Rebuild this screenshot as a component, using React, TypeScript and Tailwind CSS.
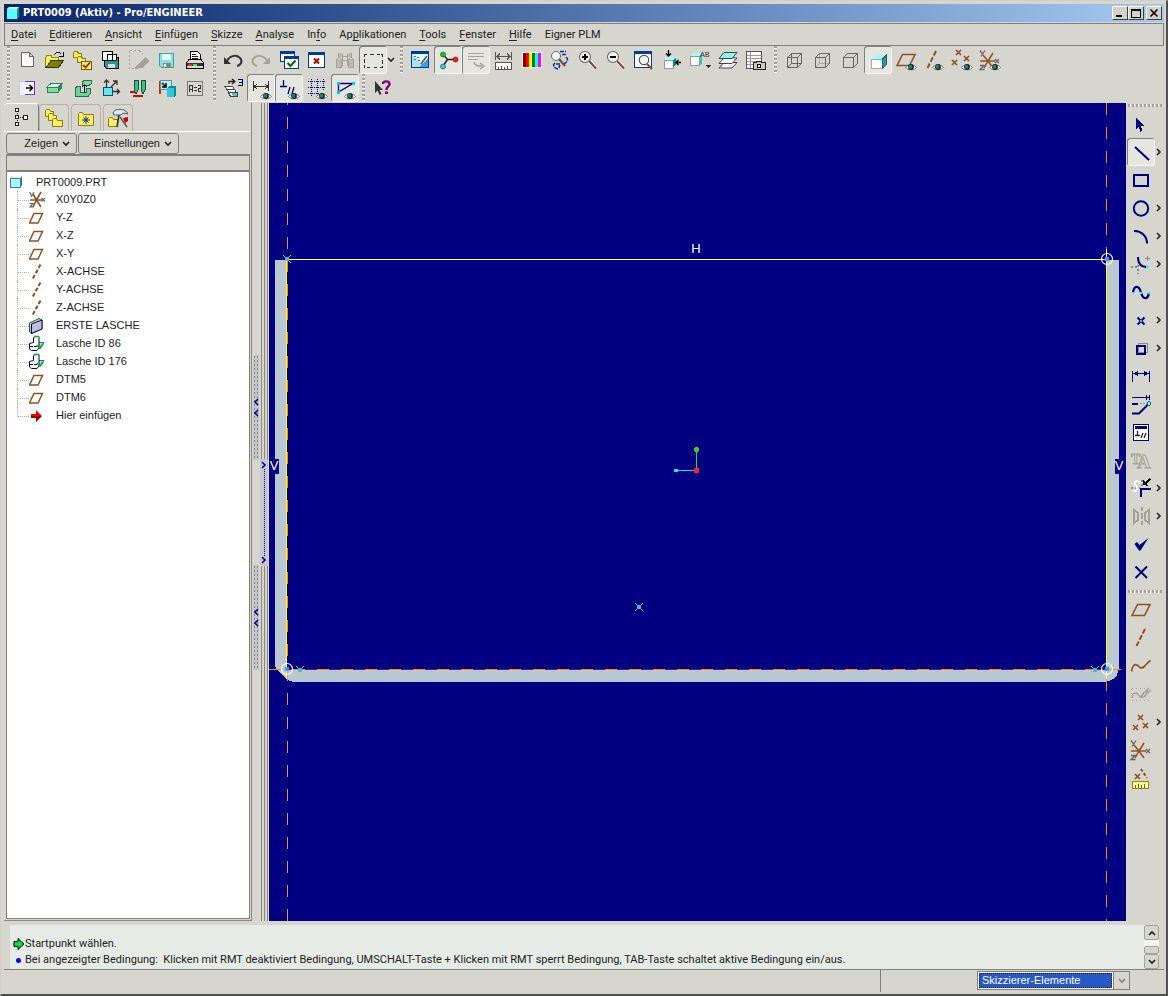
import type { ReactNode } from "react";

interface Tool {
  label: string;
  art: ReactNode;
  active?: boolean;
  disabled?: boolean;
  flyout?: boolean;
}

interface TreeItem {
  label: string;
  kind: "csys" | "plane" | "axis" | "wall" | "flange" | "insert";
}

const BROWN = "#92501f";
const NAVY = "#000080";
const GRAY = "#a5a193";

function Eye({ x = 19, y = 21 }: { x?: number; y?: number }) {
  return (
    <g transform={`translate(${x} ${y})`} shapeRendering="auto">
      <path d="M-5.5 .5C-3 -3 3 -3 5.5 .5C3 3.5 -3 3.5 -5.5 .5Z" fill="#fff" stroke="#555" strokeWidth=".8" />
      <circle cx="0" cy="0" r="2.9" fill="#222" />
      <path d="M-2 -2H1V1.5H-2Z" fill="#008a8a" />
    </g>
  );
}

function Cross({ x, y, r = 2.5, color = BROWN }: { x: number; y: number; r?: number; color?: string }) {
  return (
    <path
      d={`M${x - r} ${y - r}L${x + r} ${y + r}M${x + r} ${y - r}L${x - r} ${y + r}`}
      stroke={color}
      strokeWidth="1.7"
      shapeRendering="auto"
    />
  );
}

function Folder({ x, y, w = 11, h = 8 }: { x: number; y: number; w?: number; h?: number }) {
  return (
    <path
      d={`M${x} ${y + h}V${y + 1}L${x + 1} ${y}H${x + 4}L${x + 5} ${y + 2}H${x + w}V${y + h}Z`}
      fill="#ffef5a"
      stroke="#8c7a1e"
    />
  );
}

function Glass({ sign }: { sign: string }) {
  return (
    <g shapeRendering="auto">
      <path d="M15 15L22 22.5" stroke="#fff" strokeWidth="3.6" />
      <path d="M15 15L22 22.5" stroke="#8b4a24" strokeWidth="2.2" />
      <circle cx="11" cy="11" r="5.5" fill="#f0f3f0" stroke="#666" strokeWidth="1.1" />
      <path d={sign} stroke="#000" strokeWidth="2" />
    </g>
  );
}

function Csys() {
  return (
    <g shapeRendering="auto">
      <path d="M4 15H19M12 15L17 7M12 15L7 9M12 15L17 22M12 15L8 22" stroke={BROWN} strokeWidth="1.5" />
      <path d="M4 4.5L6.5 8M9 4.5L5 10.5M19 13L23 17M23 13L19 17M4 19.5H8L4 23.5H8.5" stroke="#666" strokeWidth="1.3" />
    </g>
  );
}

const planeArt = <path d="M5 19.5L10.5 8.5H23L17.5 19.5Z" stroke={BROWN} strokeWidth="1.6" shapeRendering="auto" />;
const axisPath = (x: number) => (
  <path d={`M${x} 5L${x - 9} 23`} stroke={BROWN} strokeWidth="1.9" strokeDasharray="5 2" shapeRendering="auto" />
);

const fileTools: Tool[] = [
  { label: "Neu", art: <path d="M8.5 6.5h8l4 4v10h-12zM16.5 6.5v4h4" fill="#fff" stroke="#666" /> },
  {
    label: "Öffnen",
    art: (
      <>
        <path d="M4.5 21.5V11.5L6 9.5H10L11 11.5H17.5V15" fill="#ffef5a" stroke="#8c8c00" />
        <path d="M5 21.5L10 14.5H22.5L17.5 21.5Z" fill="#808000" stroke="#333300" />
        <path d="M13.5 9.5C14 6 18 5 20 8M22.5 6V10.5H18" stroke="#000" />
      </>
    ),
  },
  {
    label: "Arbeitsverzeichnis",
    art: (
      <>
        <Folder x={4.5} y={5.5} w={8} h={6} />
        <Folder x={8.5} y={10.5} w={8} h={6} />
        <rect x="12.5" y="15.5" width="10" height="8" fill="#ffef5a" stroke="#6b5d10" />
        <path d="M14 19L16.5 21.5L21 16.5" stroke="#c00000" strokeWidth="1.6" shapeRendering="auto" />
      </>
    ),
  },
  {
    label: "Kopie speichern",
    art: (
      <>
        <path d="M7.5 11.5H21.5V22.5H9.5L7.5 20.5Z" fill="#1f9aa0" stroke="#000" />
        <path d="M11 18h7v4h-7z" fill="#ddd" />
        <path d="M5.5 5.5h10v9h-10zM10.5 8.5h9v6h-9z" fill="#fff" stroke="#000" />
      </>
    ),
  },
  {
    label: "Aus Sitzung entfernen",
    disabled: true,
    art: (
      <>
        <path d="M4.5 4.5H14M4.5 4.5V22.5H14M14 4.5L20 10" stroke={GRAY} strokeDasharray="2 2" />
        <path d="M20 11L24 15L17 22H13V19Z" fill={GRAY} />
        <path d="M13 20L10 22.5" stroke={GRAY} strokeWidth="2" />
      </>
    ),
  },
  {
    label: "Speichern",
    art: (
      <>
        <path d="M6.5 7.5H20.5V21.5H8.5L6.5 19.5Z" fill="#8ae0e4" stroke="#3f9ea6" />
        <path d="M9 8h9v6H9z" fill="#e4ffff" />
        <path d="M10 17h8v4h-8z" fill="#888" />
        <path d="M11 18h2v3h-2z" fill="#fff" />
      </>
    ),
  },
  {
    label: "Drucken",
    art: (
      <>
        <path d="M9.5 14V5.5H16.5L19.5 8.5V14Z" fill="#fff" stroke="#000" />
        <path d="M11 8.5H15M11 10.5H17M11 12.5H17" stroke="#222" />
        <path d="M5.5 16.5L8 13.5H20L22.5 16.5V22.5H5.5Z" fill="#d8d8d8" stroke="#000" />
        <path d="M6 17h16v3H6z" fill="#333" />
        <path d="M7 18h4v2H7z" fill="#f22" />
        <path d="M12 18h4v2h-4z" fill="#3f3" />
      </>
    ),
  },
];

const editTools: Tool[] = [
  {
    label: "Rückgängig",
    art: (
      <g shapeRendering="auto">
        <path d="M8 15C10 10 17 8 21 12C24 15 22 19 18 20" stroke="#333" strokeWidth="2" />
        <path d="M5 11V18H12Z" fill="#333" />
      </g>
    ),
  },
  {
    label: "Wiederherstellen",
    disabled: true,
    art: (
      <g shapeRendering="auto">
        <path d="M20 15C18 10 11 8 7 12C4 15 6 19 10 20" stroke={GRAY} strokeWidth="2" />
        <path d="M23 11V18H16Z" fill={GRAY} />
      </g>
    ),
  },
  {
    label: "Fenster aktivieren",
    art: (
      <>
        <path d="M5.5 5.5h14v10h-14z" fill="#fff" stroke="#003a9c" />
        <path d="M5 5h15v3H5z" fill="#003a9c" />
        <path d="M9.5 10.5h14v12h-14z" fill="#fff" stroke="#003a9c" />
        <path d="M9 10h15v3H9z" fill="#003a9c" />
        <path d="M12.5 17L15.5 20L20.5 14.5" stroke="#006400" strokeWidth="2" shapeRendering="auto" />
      </>
    ),
  },
  {
    label: "Fenster schließen",
    art: (
      <>
        <path d="M5.5 6.5h16v15h-16z" fill="#fff" stroke="#003a9c" />
        <path d="M5 6h17v3H5z" fill="#003a9c" />
        <path d="M11 12.5L16 17.5M16 12.5L11 17.5" stroke="#b00000" strokeWidth="2" shapeRendering="auto" />
      </>
    ),
  },
  {
    label: "Suchen",
    disabled: true,
    art: (
      <>
        <path d="M7 7h4v4H7zM17 7h4v4h-4zM6 13h5v8H6zM17 13h5v8h-5z" fill="#bdbaae" />
        <path d="M7.5 7V11L5.5 14V21H10.5V14L8.5 11M20.5 7V11L22.5 14V21H17.5V14L19.5 11M11.5 8V20M16.5 8V20M12 10.5H16M12 14.5H16" stroke={GRAY} />
      </>
    ),
  },
  {
    label: "Auswahlrahmen",
    active: true,
    art: (
      <path
        d="M5 11V8.5H8M11 8.5H15M18 8.5H21M22 8.5H23.5V11M23.5 14V18M23.5 20V21.5H21M18 21.5H15M11 21.5H8M6 21.5H5.5V19M5.5 17V13"
        stroke="#333"
      />
    ),
  },
];

const viewTools: Tool[] = [
  {
    label: "Neu zeichnen",
    art: (
      <>
        <path d="M5.5 5.5h17v16h-17z" fill="#e0fbff" stroke="#003a9c" />
        <path d="M5 5h18v3H5z" fill="#003a9c" />
        <path d="M6 8L17 20L22 12V21H6Z" fill="#a8e4f8" />
        <path d="M15 19L22 12V21H14Z" fill="#3f9ee0" />
        <path d="M8 10.5h2M8 13.5h2M11 11.5h2M12 14.5h2" stroke="#2878c8" />
        <path d="M21 10L15 18" stroke="#7a4a20" strokeWidth="1.5" shapeRendering="auto" />
      </>
    ),
  },
  {
    label: "Drehzentrum",
    active: true,
    art: (
      <g shapeRendering="auto">
        <path d="M9 8.5L13.5 13.5L9 20M13.5 13.5H21" stroke="#222" strokeWidth="1.5" />
        <circle cx="9" cy="8.5" r="2.5" fill="#19c819" stroke="#075207" strokeWidth=".6" />
        <circle cx="9" cy="20.5" r="2.5" fill="#34c8d0" stroke="#075258" strokeWidth=".6" />
        <circle cx="21.5" cy="13.5" r="2.5" fill="#f02020" stroke="#700" strokeWidth=".6" />
      </g>
    ),
  },
  {
    label: "Orientierungsmodus",
    active: true,
    disabled: true,
    art: (
      <>
        <path d="M6 7.5H22M6 10.5H22M6 13.5H16" stroke={GRAY} />
        <path d="M12 16C13 20 16 20 20 20M18 17L22 20L18 23" stroke={GRAY} strokeWidth="1.5" shapeRendering="auto" />
      </>
    ),
  },
  {
    label: "Messen",
    art: (
      <>
        <path d="M5.5 6V14M21.5 6V14M6 10.5H21M10 7.5L7 10.5L10 13.5M17 7.5L20 10.5L17 13.5" stroke="#555" />
        <path d="M5.5 16.5h16v7h-16z" fill="#fff" stroke="#555" />
        <path d="M8.5 21V23M11.5 20V23M14.5 21V23M17.5 20V23" stroke="#555" />
      </>
    ),
  },
  {
    label: "Farben",
    art: (
      <>
        <path d="M4 6h20v16H4z" fill="#fff" />
        <path d="M5 7h3v14H5z" fill="#800000" />
        <path d="M8 7h3v14H8z" fill="#f00" />
        <path d="M11 7h3v14h-3z" fill="#ff0" />
        <path d="M14 7h3v14h-3z" fill="#008000" />
        <path d="M17 7h3v14h-3z" fill="#0ff" />
        <path d="M20 7h3v14h-3z" fill="#f0f" />
      </>
    ),
  },
  {
    label: "Bildschirm drehen",
    art: (
      <g shapeRendering="auto">
        <path d="M13 13L19 20" stroke="#8b4a24" strokeWidth="2.2" />
        <circle cx="10" cy="10" r="4.5" fill="#f4f7f4" stroke="#666" />
        <path d="M14 5.5H20M16 8.5H21M20 11C23 13 21 16 18 18M9 17C6 19 8 23 13 23M10 18L14 18L13 22" stroke="#0a32a0" strokeWidth="1.5" strokeDasharray="4 1" />
      </g>
    ),
  },
  { label: "Vergrößern", art: <Glass sign="M8 11H14M11 8V14" /> },
  { label: "Verkleinern", art: <Glass sign="M8 11H14" /> },
  {
    label: "Neu einpassen",
    art: (
      <>
        <path d="M4.5 5.5h17v16h-17z" fill="#fff" stroke="#003a9c" />
        <path d="M4 5h18v3H4z" fill="#003a9c" />
        <g shapeRendering="auto">
          <path d="M17 18L22 23" stroke="#8b4a24" strokeWidth="2" />
          <circle cx="14" cy="14" r="4.7" fill="#f8f8f8" stroke="#555" strokeWidth="1.2" />
        </g>
      </>
    ),
  },
  {
    label: "Neu orientieren",
    art: (
      <>
        <path d="M6 14L9 11H18V18L15 22H6Z" fill="#9ff" />
        <path d="M6 14h9v8H6z" fill="#fff" stroke="#999" />
        <path d="M15 14L18 11V18L15 22Z" fill="#008b8b" />
        <path d="M10.5 4V10M8 7.5L10.5 10L13 7.5M23 16.5H18M20.5 14L18 16.5L20.5 19" stroke="#000" strokeWidth="1.4" shapeRendering="auto" />
      </>
    ),
  },
  {
    label: "Gespeicherte Ansichten",
    art: (
      <>
        <path d="M4 10L7 7H16V17L13 20H4Z" fill="#9ff" />
        <path d="M4.5 10.5h9v9h-9z" fill="#fff" stroke="#999" />
        <path d="M13 10L16 7V17L13 20Z" fill="#4cb8c0" />
        <text x="14" y="11" fontSize="8" fontFamily="Liberation Mono, monospace" fill="#333">
          AB
        </text>
        <path d="M19 19h6l-3 3z" fill="#333" />
      </>
    ),
  },
  {
    label: "Ebenen",
    art: (
      <g stroke="#444" shapeRendering="auto">
        <path d="M5 22L10 16.5H23L18 22Z" fill="#fff" />
        <path d="M5 17.5L10 12H23L18 17.5Z" fill="#fff" />
        <path d="M5 12.5L10 6.5H23L18 12.5Z" fill="#8ff4f6" />
      </g>
    ),
  },
  {
    label: "Ansichtsmanager",
    art: (
      <>
        <path d="M4.5 5.5h15v17h-15z" fill="#fff" stroke="#555" />
        <path d="M5 9.5H19M5 12.5H19M5 15.5H19M5 18.5H19M8.5 6V22" stroke="#999" />
        <path d="M11.5 16.5H14L15 15H19L20 16.5H23.5V23.5H11.5Z" fill="#d0c9b4" stroke="#222" />
        <circle cx="17" cy="20" r="2" fill="#fff" stroke="#000" />
      </>
    ),
  },
];

const displayTools: Tool[] = [
  {
    label: "Drahtmodell",
    art: <path d="M7.5 11.5H17.5V21.5H7.5ZM11.5 7.5H21.5V17.5H11.5ZM7.5 11.5L11.5 7.5M17.5 11.5L21.5 7.5M17.5 21.5L21.5 17.5M7.5 21.5L11.5 17.5" stroke="#666" />,
  },
  {
    label: "Verdeckte Kante",
    art: (
      <>
        <path d="M11.5 7.5V17.5H21.5M7.5 21.5L11.5 17.5" stroke="#aaa" />
        <path d="M7.5 11.5H17.5V21.5H7.5ZM7.5 11.5L11.5 7.5H21.5V17.5L17.5 21.5M17.5 11.5L21.5 7.5" stroke="#666" />
      </>
    ),
  },
  { label: "Keine Verdeckten", art: <path d="M7.5 11.5H17.5V21.5H7.5ZM7.5 11.5L11.5 7.5H21.5V17.5L17.5 21.5M17.5 11.5L21.5 7.5" stroke="#666" /> },
  {
    label: "Schattiert",
    active: true,
    art: (
      <>
        <path d="M7 13L12 8.5H23L18 13Z" fill="#9ff" />
        <path d="M7.5 13.5h11v9h-11z" fill="#fff" stroke="#aaa" />
        <path d="M18.5 13L22.5 9V18.5L18.5 22.5Z" fill="#1aa0a8" stroke="#357" />
      </>
    ),
  },
  { label: "Bezugsebenen", art: <>{planeArt}<Eye /></> },
  { label: "Bezugsachsen", art: <>{axisPath(16)}<Eye x={18} /></> },
  { label: "Bezugspunkte", art: <><Cross x={10.5} y={6.5} /><Cross x={18.5} y={12.5} /><Cross x={6.5} y={16.5} /><Eye /></> },
  { label: "Koordinatensysteme", art: <><Csys /><Eye /></> },
];

const featureTools: Tool[] = [
  {
    label: "Einfügen",
    art: (
      <>
        <path d="M6 7h6v14H6z" fill="#f0f0ff" stroke="#ccd" />
        <path d="M12 7.5H21.5V20.5H12" fill="#fff" stroke="#8a2be2" />
        <path d="M13 14H19M16.5 11L19.5 14L16.5 17" stroke="#000" strokeWidth="1.5" shapeRendering="auto" />
      </>
    ),
  },
  {
    label: "Flach",
    art: (
      <>
        <path d="M6 13L10 9.5H21L17 13Z" fill="#d4f8e0" stroke="#3a7a5a" />
        <path d="M6 13H17V18H6Z" fill="#7be0a4" stroke="#3a7a5a" />
        <path d="M17 13L21 9.5V14.5L17 18Z" fill="#2d8a5c" />
      </>
    ),
  },
  {
    label: "Flansch",
    art: (
      <>
        <path d="M13 8.5L15 6.5H22V10L20 11.5H13Z" fill="#7be0a4" stroke="#2d6a4c" />
        <path d="M6.5 14.5L8 12H11V18H17V14H21V20L19 22.5H6.5Z" fill="#6cd49a" stroke="#2d6a4c" />
        <path d="M15.5 19V11M13 13L15.5 10.5L18 13" stroke="#000" />
      </>
    ),
  },
  {
    label: "Verschieben",
    art: (
      <>
        <path d="M6.5 13.5h9v8h-9z" fill="#60e8f0" stroke="#246" />
        <path d="M9.5 13V6M7 8.5L9.5 6L12 8.5M14 13L20 7M16 7H20V11M16 17.5H22M20 15L22.5 17.5L20 20" stroke="#333" strokeWidth="1.3" shapeRendering="auto" />
      </>
    ),
  },
  {
    label: "Stifte",
    art: (
      <>
        <path d="M9 6h4v10l-2 4-2-4zM16 6h4v10l-2 4-2-4z" fill="#39c088" stroke="#174e38" />
        <path d="M5 17.5H10M8 21.5H18" stroke="#d00" strokeWidth="2" />
      </>
    ),
  },
  {
    label: "Referenz",
    art: (
      <>
        <path d="M6.5 20V7" stroke="#c22" strokeWidth="2" />
        <path d="M7.5 6.5H18.5V15.5H7.5Z" fill="#b8ecf4" stroke="#6a8aa0" />
        <path d="M14 14L16 12H23V21L21 23H14Z" fill="#0a8a98" />
        <path d="M14 14h7v9h-7z" fill="#30c8d8" />
        <path d="M9 9L13 13M13 9V13H9" stroke="#000" strokeWidth="1.5" shapeRendering="auto" />
      </>
    ),
  },
  {
    label: "Beziehungen",
    art: (
      <>
        <path d="M6.5 7.5h15v14h-15z" stroke="#777" />
        <path d="M8.5 18V12L9.5 11H10.5L11.5 12V18M8.5 15.5H11.5M13 13.5H15.5M13 16.5H15.5M17 11.5H19.5V14.5H17.5V17.5H20" stroke="#333" />
      </>
    ),
  },
];

const sketchTools: Tool[] = [
  {
    label: "Skizzenansicht",
    art: (
      <>
        <path d="M5.5 12.5h8l2 3h-7zM7.5 15.5h8l2 3h-7zM9.5 18.5h9v4h-7z" fill="#fff" stroke="#444" />
        <path d="M13 19h5v3h-4z" fill="#2fd0d8" />
        <path d="M10 10V7.5H15M13 5L16 7.5L13 10" stroke="#222" strokeWidth="1.3" shapeRendering="auto" />
        <path d="M19 5.5H23.5V11.5H19M20 8.5H23" stroke={NAVY} />
      </>
    ),
  },
  { label: "Bemaßungen anzeigen", active: true, art: <><path d="M6.5 7V17M21.5 7V17M7 12.5H21M10 10L7 12.5L10 15M18 10L21 12.5L18 15" stroke="#333" /><Eye x={19} y={22} /></> },
  { label: "Bedingungen anzeigen", active: true, art: <><path d="M5 12.5H12M8.5 6V12M13 20L15 13M17 20L19 13" stroke={NAVY} strokeWidth="1.3" shapeRendering="auto" /><Eye x={19} y={22} /></> },
  { label: "Raster anzeigen", art: <><path d="M5 7.5H22M5 13.5H22M5 19.5H16M8.5 5V22M14.5 5V22M20.5 5V17" stroke={NAVY} strokeDasharray="1 1" /><Eye x={19} y={22} /></> },
  { label: "Eckpunkte anzeigen", active: true, art: <><path d="M7.5 9.5H22L7.5 18Z" stroke={NAVY} strokeWidth="1.3" shapeRendering="auto" /><path d="M6 8h3v3H6zM21 8h3v3h-3zM6 17h3v3H6z" fill="#00c8ff" /><Eye x={19} y={22} /></> },
];

const helpTools: Tool[] = [
  {
    label: "Kontexthilfe",
    art: (
      <g shapeRendering="auto">
        <path d="M7 7V19L9.5 16.5L11.5 21L13.5 20L11.5 16H15Z" fill="#333" />
        <path d="M15 10C15 6.5 21.5 6.5 21.5 10C21.5 12.5 18.5 12.5 18.5 16" stroke="#800080" strokeWidth="2.4" />
        <path d="M17 17.5h3v2.5h-3z" fill="#800080" />
      </g>
    ),
  },
];

const sketcherTools: Tool[] = [
  { label: "Auswählen", art: <path d="M9 7V19L11.5 16.5L13.5 21.5L15.5 20.5L13.5 15.5H17Z" fill={NAVY} /> },
  { label: "Linie", active: true, flyout: true, art: <path d="M8 9L22 22" stroke={NAVY} strokeWidth="2" shapeRendering="auto" /> },
  { label: "Rechteck", art: <path d="M7 9H21V20H7Z" stroke={NAVY} strokeWidth="2" /> },
  { label: "Kreis", flyout: true, art: <circle cx="14" cy="14.5" r="7.2" stroke={NAVY} strokeWidth="2" shapeRendering="auto" /> },
  { label: "Bogen", flyout: true, art: <path d="M7 9C14 8.5 20 14 20 21.5" stroke={NAVY} strokeWidth="2" shapeRendering="auto" /> },
  {
    label: "Verrundung",
    flyout: true,
    art: (
      <>
        <path d="M4 17H12M11 15V24" stroke="#888" strokeWidth="2" strokeDasharray="2 2" />
        <path d="M11 7C11 13 14 17 20 17" stroke={NAVY} strokeWidth="2" shapeRendering="auto" />
        <path d="M20.5 6V11M18 8.5H23" stroke="#888" />
        <path d="M19 16h3v2h-3z" fill="#0ff" />
      </>
    ),
  },
  {
    label: "Spline",
    art: (
      <>
        <path d="M6 14.5C7 7 12 7 14 14.5C16 22 21 22 22 14.5" stroke={NAVY} strokeWidth="2.2" shapeRendering="auto" />
        <path d="M5 14h2v2H5zM13 14h2v2h-2zM21 14h2v2h-2z" fill="#0ff" />
      </>
    ),
  },
  { label: "Punkt", flyout: true, art: <><path d="M10.5 11.5L17.5 18.5M17.5 11.5L10.5 18.5" stroke={NAVY} strokeWidth="2" shapeRendering="auto" /><path d="M13 14h2v2h-2z" fill="#0cf" /></> },
  { label: "Kante verwenden", flyout: true, art: <><path d="M11.5 9.5H20.5V18.5H11.5Z" stroke="#888" /><path d="M10 12H18V20H10Z" stroke={NAVY} strokeWidth="2" /></> },
  { label: "Bemaßung", art: <><path d="M5.5 9V20M22.5 9V20M6 11.5H22" stroke={NAVY} /><path d="M7 11.5L11 8.5V14.5ZM21 11.5L17 8.5V14.5Z" fill={NAVY} /></> },
  {
    label: "Werte ändern",
    art: (
      <>
        <path d="M5 7.5H22M19.5 5V10M22.5 5V10" stroke={NAVY} />
        <path d="M5 14H11" stroke={NAVY} strokeWidth="2" />
        <path d="M13 13.5H21" stroke="#999" strokeDasharray="2 1" />
        <path d="M5 23.5H12L21 14.5" stroke={NAVY} strokeWidth="2" shapeRendering="auto" />
        <circle cx="22" cy="13.5" r="1.7" fill="#8ff" stroke="#068" />
      </>
    ),
  },
  { label: "Bedingungen", art: <><path d="M6.5 6.5h15v16h-15z" fill="#fff" stroke={NAVY} /><path d="M8 8h12v3H8z" fill={NAVY} /><path d="M8 17.5H13M10.5 13V17M14 20L16 15M17 20L19 15" stroke="#222" strokeWidth="1.3" shapeRendering="auto" /></> },
  {
    label: "Text",
    disabled: true,
    art: (
      <g fontFamily="Liberation Serif, serif" fontWeight="bold" fill="#d6d6ce" stroke={GRAY} strokeWidth=".9" shapeRendering="auto">
        <text x="4" y="18" fontSize="14">T</text>
        <text x="10" y="22" fontSize="19">A</text>
      </g>
    ),
  },
  {
    label: "Trimmen",
    flyout: true,
    art: (
      <>
        <path d="M4 14H13M15 6V14" stroke="#888" strokeWidth="2" strokeDasharray="2 2" />
        <path d="M13 9C9 4 6 9 9 12C12 15 9 18 6 17" stroke="#fff" strokeWidth="1.8" shapeRendering="auto" />
        <path d="M14 23V15H24" stroke={NAVY} strokeWidth="2" />
        <path d="M16 11V6L18 8L23 4L24 6L19 10L21 12Z" fill="#000" />
      </>
    ),
  },
  { label: "Spiegeln", disabled: true, flyout: true, art: <path d="M7 8L11 11V18L7 21ZM22 8L18 11V18L22 21ZM14.5 5V9M14.5 11V17M14.5 19V23" stroke={GRAY} strokeWidth="2" /> },
  { label: "Fertig", art: <path d="M7.5 14L10 12L12.5 15L21.5 8L13.5 20.5H12Z" fill={NAVY} shapeRendering="auto" /> },
  { label: "Beenden", art: <path d="M8.5 8.5L20 20M20 8.5L8.5 20" stroke={NAVY} strokeWidth="2" shapeRendering="auto" /> },
];

const datumTools: Tool[] = [
  { label: "Bezugsebene", art: planeArt },
  { label: "Bezugsachse", art: axisPath(18) },
  { label: "Bezugskurve", art: <path d="M4.5 19.5C6 10 10 12 13 15.5C17 18 19 11 23.5 8.5" stroke={BROWN} strokeWidth="1.6" shapeRendering="auto" /> },
  {
    label: "Skizzierte Kurve",
    disabled: true,
    art: (
      <>
        <path d="M5 8.5H20M5 20.5H22M4.5 9V21" stroke={GRAY} strokeDasharray="1 3" />
        <path d="M5 18C6 11 10 12 13 17L22 8M15 18L24 10M14 18L17 12M18 17L21 9" stroke={GRAY} strokeWidth="1.3" shapeRendering="auto" />
      </>
    ),
  },
  { label: "Bezugspunkt", flyout: true, art: <><Cross x={13.5} y={9.5} /><Cross x={8.5} y={19.5} /><Cross x={18.5} y={17.5} /></> },
  { label: "Koordinatensystem", art: <Csys /> },
  {
    label: "Analyse-Feature",
    art: (
      <>
        <Cross x={10.5} y={12.5} />
        <path d="M14 5L20 14" stroke={BROWN} strokeWidth="2" strokeDasharray="3 2" shapeRendering="auto" />
        <path d="M5.5 17.5h16v7h-16z" fill="#ffff80" stroke="#8c8420" />
        <path d="M8.5 21V24M11.5 20V24M14.5 21V24M17.5 20V24" stroke="#665" />
      </>
    ),
  },
];

const menus = [
  "Datei", "Editieren", "Ansicht", "Einfügen", "Skizze", "Analyse",
  "Info", "Applikationen", "Tools", "Fenster", "Hilfe", "Eigner PLM",
];
// position of the underlined access key, -1 for none
const accessAt: Record<string, number> = { Info: 2, Applikationen: 2, "Eigner PLM": -1 };

const tree: TreeItem[] = [
  { label: "X0Y0Z0", kind: "csys" },
  { label: "Y-Z", kind: "plane" },
  { label: "X-Z", kind: "plane" },
  { label: "X-Y", kind: "plane" },
  { label: "X-ACHSE", kind: "axis" },
  { label: "Y-ACHSE", kind: "axis" },
  { label: "Z-ACHSE", kind: "axis" },
  { label: "ERSTE LASCHE", kind: "wall" },
  { label: "Lasche ID 86", kind: "flange" },
  { label: "Lasche ID 176", kind: "flange" },
  { label: "DTM5", kind: "plane" },
  { label: "DTM6", kind: "plane" },
  { label: "Hier einfügen", kind: "insert" },
];

const treeArt: Record<TreeItem["kind"], ReactNode> = {
  csys: (
    <g shapeRendering="auto">
      <path d="M1 9H13M7.5 9L12 1M7.5 9L4 3M7.5 9L12 16M7.5 9L4 16" stroke={BROWN} strokeWidth="1.6" />
      <path d="M.5 1L2.5 4M5 1L2 6M12.5 7L16 10.5M16 7L12.5 10.5M.5 12.5H4L1 16H4.5" stroke="#666" strokeWidth="1.2" />
    </g>
  ),
  plane: <path d="M.5 14L5 4.5H13.5L9 14Z" stroke={BROWN} strokeWidth="1.5" shapeRendering="auto" />,
  axis: <path d="M11.5 1.5L3 17" stroke={BROWN} strokeWidth="2" strokeDasharray="4 2" shapeRendering="auto" />,
  wall: (
    <>
      <path d="M.5 6L10 1.5L13 3V12L2.5 16.5L.5 15Z" fill="#c8c8d0" stroke="#087808" />
      <path d="M2.5 7L13 3V12L2.5 16.5Z" fill="#c0c0cc" stroke={NAVY} />
    </>
  ),
  flange: (
    <>
      <path d="M9 7.5H15L11 13" fill="#b8d8d8" stroke="#088" />
      <path d="M4.5 7.5V2.5L6 1.5H10V13L8 15.5H2.5L.5 14V8.5Z" fill="#fff" stroke={NAVY} />
      <path d="M1 11.5H8" stroke={NAVY} strokeDasharray="3 1" />
      <path d="M8 10L11 13L14 9M5 1.5H10" stroke="#0a0" strokeWidth="1.6" />
    </>
  ),
  insert: (
    <>
      <path d="M2 7H7V3L13 9H2Z" fill="#f00" />
      <path d="M2 11H7V15L13 9H2Z" fill="#900" />
    </>
  ),
};

function Chevron({ dir, className }: { dir: "up" | "down" | "left" | "right"; className?: string }) {
  const d = {
    up: "M1 6L4 3L7 6",
    down: "M1 2L4 5L7 2",
    left: "M6 1L3 4L6 7",
    right: "M2 1L5 4L2 7",
  }[dir];
  return (
    <svg viewBox="0 0 8 8" className={`h-2 w-2 shrink-0 ${className ?? "text-[#222]"}`} fill="none" aria-hidden="true">
      <path d={d} stroke="currentColor" strokeWidth="1.6" />
    </svg>
  );
}

function ToolButton({ tool }: { tool: Tool }) {
  return (
    <button
      type="button"
      aria-label={tool.label}
      disabled={tool.disabled}
      className={`h-7 w-7 shrink-0 rounded-[3px] ${
        tool.active ? "bg-[#e6e6e0] shadow-[inset_1px_1px_0_#808080,inset_-1px_-1px_0_#f6f6f2]" : ""
      }`}
    >
      <svg viewBox="0 0 28 28" className="h-7 w-7" fill="none" shapeRendering="crispEdges" aria-hidden="true">
        {tool.art}
      </svg>
    </button>
  );
}

function Handle({ className }: { className: string }) {
  return (
    <div className={`flex shrink-0 justify-center ${className}`}>
      <div className="h-7 w-[3px] bg-[repeating-linear-gradient(#a5a193_0_2px,#f4f4ee_2px_3px,#d6d6ce_3px_4px)]" />
    </div>
  );
}

function ToolGroup({ tools }: { tools: Tool[] }) {
  return (
    <div className="flex">
      {tools.map((tool) => (
        <ToolButton key={tool.label} tool={tool} />
      ))}
    </div>
  );
}

function TitleBar() {
  const button =
    "flex h-[14px] w-4 items-center justify-center border border-t-white border-l-white border-r-[#404040] border-b-[#404040] bg-[#d4d0c8]";
  return (
    <header className="flex h-[18px] items-center bg-linear-to-r from-[#0a246a] to-[#a6caf0] pr-[2px] pl-[2px]">
      <svg viewBox="0 0 14 14" className="h-[14px] w-[14px]" aria-hidden="true">
        <path d="M1 3L3 1H13V11L11 13H1Z" fill="#1b8a90" />
        <path d="M1 3h10v10H1z" fill="#5ff" />
        <path d="M1 3L3 1H13L11 3Z" fill="#bff" />
      </svg>
      <h1 className="ml-[3px] flex-1 font-['DejaVu_Sans_Condensed','Noto_Sans',sans-serif] text-[11px] leading-4 font-bold text-white">
        PRT0009 (Aktiv) - Pro/ENGINEER
      </h1>
      <button type="button" aria-label="Minimieren" className={button}>
        <svg viewBox="0 0 12 12" className="h-3 w-3" aria-hidden="true"><path d="M2 8h6v2H2z" /></svg>
      </button>
      <button type="button" aria-label="Maximieren" className={button}>
        <svg viewBox="0 0 12 12" className="h-3 w-3" aria-hidden="true"><path d="M1 2h10v9H1zM2 4v6h8V4z" fillRule="evenodd" /></svg>
      </button>
      <button type="button" aria-label="Schließen" className={`${button} ml-[2px]`}>
        <svg viewBox="0 0 12 12" className="h-3 w-3" aria-hidden="true"><path d="M2.5 2.5L9.5 9.5M9.5 2.5L2.5 9.5" stroke="#000" strokeWidth="1.6" /></svg>
      </button>
    </header>
  );
}

function MenuBar() {
  return (
    <nav className="mt-px flex h-[23px] items-center gap-[13px] border border-[#808080] px-[6px] pt-[2px]">
      {menus.map((name) => {
        const at = accessAt[name] ?? 0;
        return (
          <button key={name} type="button" className="whitespace-nowrap">
            {at < 0 ? name : (
              <>
                {name.slice(0, at)}
                <span className="underline underline-offset-2">{name[at]}</span>
                {name.slice(at + 1)}
              </>
            )}
          </button>
        );
      })}
    </nav>
  );
}

function ModelTree() {
  const tab = "flex h-[27px] items-center justify-center rounded-t-[4px] border border-b-0 border-[#b8b2a2]";
  const menuButton =
    "flex h-[21px] items-center justify-end gap-1 rounded-[3px] border border-[#808080] pr-[6px]";
  return (
    <aside className="flex w-[248px] shrink-0 flex-col border-r border-b border-[#8c897c] font-['Liberation_Sans',Arial,sans-serif]">
      <div className="flex items-end border-b border-white">
        <button type="button" aria-label="Modellbaum" className="flex h-7 w-[35px] items-center justify-center rounded-t-[4px] border-t border-r border-t-white border-r-[#808080]">
          <svg viewBox="0 0 14 20" className="h-5 w-[14px]" fill="none" shapeRendering="crispEdges" aria-hidden="true">
            <path d="M1.5 .5h3v3h-3zM1.5 7.5h3v3h-3zM1.5 14.5h3v3h-3zM9.5 7.5h4v4h-4z" fill="#fff" stroke="#222" />
            <path d="M3.5 5V6M3.5 12V13M6 9.5H9" stroke="#222" strokeDasharray="1 1" />
          </svg>
        </button>
        <button type="button" aria-label="Ordner" className={`${tab} w-[30px]`}>
          <svg viewBox="0 0 20 20" className="h-5 w-5" fill="none" aria-hidden="true">
            <Folder x={1.5} y={1.5} w={8} h={7} />
            <Folder x={4.5} y={5.5} w={8} h={7} />
            <Folder x={8.5} y={10.5} w={10} h={8} />
          </svg>
        </button>
        <button type="button" aria-label="Favoriten" className={`${tab} ml-[2px] w-[30px]`}>
          <svg viewBox="0 0 20 20" className="h-5 w-5" fill="none" aria-hidden="true">
            <Folder x={2.5} y={4.5} w={15} h={13} />
            <path d="M10 8V16M6 12H14M7.5 9.5L12.5 14.5M12.5 9.5L7.5 14.5" stroke="#0030a0" />
          </svg>
        </button>
        <button type="button" aria-label="Verbindungen" className={`${tab} ml-[2px] w-[30px]`}>
          <svg viewBox="0 0 20 20" className="h-5 w-5" fill="none" aria-hidden="true">
            <Folder x={0.5} y={9.5} w={9} h={9} />
            <path d="M5 5C6 1 12 1 16 2L20 5V6L15 5L13 7H6Z" fill="#d4ecec" stroke="#556" />
            <path d="M11 7L9 19" stroke="#333" strokeWidth="1.6" />
            <path d="M12 9L19 19" stroke="#555" strokeWidth="1.4" />
            <path d="M15 10L20 9V13L17 15Z" fill="#c00" />
          </svg>
        </button>
      </div>
      <div className="mt-px flex gap-px pl-[2px]">
        <button type="button" className={`${menuButton} w-[71px]`}>
          Zeigen <Chevron dir="down" />
        </button>
        <button type="button" className={`${menuButton} w-[101px]`}>
          Einstellungen <Chevron dir="down" />
        </button>
      </div>
      <div className="mr-px mb-px ml-[2px] flex flex-1 flex-col border-t-2 border-r border-b border-l border-[#808080] bg-white">
        <div className="h-4 border-b-2 border-[#808080] bg-[#d6d6ce]" />
        <div className="mt-px flex h-[18px] items-center gap-[13px] pl-[2px]">
          <svg viewBox="0 0 14 14" className="h-[14px] w-[14px]" aria-hidden="true">
            <path d="M1 4L4 1H13V10L11 13H1Z" fill="#178088" />
            <path d="M1 4L4 1H13L11 4Z" fill="#d8ffff" />
            <path d="M1.5 3.5h10v9h-10z" fill="#9ff" stroke="#668" />
          </svg>
          <span className="leading-4">PRT0009.PRT</span>
        </div>
        <ul>
          {tree.map((item, i) => (
            <li key={item.label} className="flex h-[18px] pl-[10px]">
              <div className={`w-3 border-l border-dotted border-[#b5b29c] ${i === tree.length - 1 ? "h-[10px]" : "h-[18px]"}`}>
                <div className="h-[10px] border-b border-dotted border-[#b5b29c]" />
              </div>
              <svg viewBox="0 0 17 18" className="h-[18px] w-[17px]" fill="none" aria-hidden="true">
                {treeArt[item.kind]}
              </svg>
              <span className="ml-[10px] leading-4">{item.label}</span>
            </li>
          ))}
        </ul>
      </div>
    </aside>
  );
}

function Grip() {
  return (
    <div className="flex h-[105px] w-[6px] flex-col items-center justify-center gap-[3px] bg-[#c4c4c8] bg-[radial-gradient(#8c8c98_1px,transparent_1px)] bg-size-[3px_4px]">
      <Chevron dir="left" className="text-[#0000a0]" />
      <Chevron dir="left" className="text-[#0000a0]" />
    </div>
  );
}

function Splitter() {
  const rail =
    "w-[7px] flex-1 border-x border-[#8c897c] bg-[linear-gradient(90deg,transparent_2px,#8c897c_2px_3px,transparent_3px)]";
  return (
    <div className="flex w-[17px] shrink-0">
      <div className="flex w-2 flex-col items-center justify-center gap-[105px]">
        <Grip />
        <Grip />
      </div>
      <div className="flex w-2 flex-col items-center">
        <div className={rail} />
        <div className="flex h-[107px] w-2 flex-col items-center justify-between bg-[#c8c8cc] py-[2px]">
          <Chevron dir="right" className="text-[#0000a0]" />
          <div className="w-px flex-1 border-l border-dotted border-[#0000a0]" />
          <Chevron dir="right" className="text-[#0000a0]" />
        </div>
        <div className={rail} />
      </div>
    </div>
  );
}

function Vertex({ x, y }: { x: number; y: number }) {
  return (
    <g>
      <circle cx={x} cy={y} r="5.5" stroke="#ffffc8" strokeWidth="1.2" shapeRendering="auto" />
      <path d={`M${x - 0.5} ${y - 10}V${y + 10}`} stroke="#ffffc8" />
      <rect x={x - 2} y={y - 2} width="4" height="4" fill="#2f9cff" />
    </g>
  );
}

function SketchCanvas() {
  return (
    <svg
      viewBox="0 0 857 818"
      role="img"
      aria-label="Skizze"
      className="min-h-0 min-w-0 flex-1 bg-[#000080]"
      fill="none"
      shapeRendering="crispEdges"
    >
      {/* sheet metal profile */}
      <path d="M6 157H18V566H838V157H850V562Q850 579 833 579H28Q20 579 16 575L9 568Q6 565 6 560Z" fill="#bac8d2" />

      {/* reference axes */}
      <path d="M18.5 -10V157M18.5 566V818" stroke="#e8963c" strokeDasharray="12 12" />
      <path d="M837.5 0V157M837.5 576V818" stroke="#ff8c00" strokeDasharray="12 12" />
      <path d="M18 566.5H838" stroke="#5a1090" />
      <path d="M0 566.5H857" stroke="#ff8c00" strokeDasharray="12 12" />
      <path d="M18.5 157V566" stroke="#ff8c00" strokeDasharray="12 12" />

      {/* sketched lines */}
      <path d="M18 156.5H838" stroke="#ffffe0" />
      <path d="M17.5 157V566M837.5 157V566" stroke="#ff0" />

      <path
        d="M27 563L35 571M35 563L27 571M822 563L830 571M830 563L822 571M366 500L374 508M374 500L366 508M14 152L22 160M22 152L14 160"
        stroke="#d8d040"
      />
      <path d="M29 565h4v4h-4zM824 565h4v4h-4zM368 502h4v4h-4zM16 154h4v4h-4z" fill="#3cbcec" />
      <Vertex x={838} y={156} />
      <Vertex x={18} y={566} />
      <Vertex x={838} y={566} />

      {/* spin center */}
      <path d="M427.5 367V347" stroke="#20e020" />
      <path d="M428 367.5H407" stroke="#20e0e0" />
      <circle cx="427.5" cy="346.5" r="2.5" fill="#20e020" />
      <circle cx="407" cy="367.5" r="2" fill="#20e0e0" />
      <rect x="425" y="365" width="5" height="5" fill="#ff2020" />

      <path d="M0 356h10v15H0zM846 356h8v15h-8z" fill="#000080" />
      <g fill="#fff" fontFamily="Liberation Sans, Arial, sans-serif" fontSize="13" textAnchor="middle">
        <text x="427" y="150">H</text>
        <text x="5" y="367">V</text>
        <text x="850" y="367">V</text>
      </g>
    </svg>
  );
}

function SideHandle() {
  return (
    <div className="flex h-[10px] items-center px-[2px]">
      <div className="h-[3px] flex-1 bg-[repeating-linear-gradient(90deg,#a5a193_0_2px,#f4f4ee_2px_3px,#d6d6ce_3px_4px)]" />
    </div>
  );
}

function SideTools({ tools }: { tools: Tool[] }) {
  return (
    <div className="flex flex-col">
      {tools.map((tool) => (
        <div key={tool.label} className="flex items-center pl-px">
          <ToolButton tool={tool} />
          {tool.flyout && <Chevron dir="right" />}
        </div>
      ))}
    </div>
  );
}

export default function App() {
  return (
    <div className="flex h-screen flex-col overflow-hidden border-t border-r-2 border-b-2 border-l border-t-[#d4d0c8] border-r-[#505050] border-b-[#505050] border-l-[#d4d0c8] bg-[#d6d6ce] pt-[3px] pr-[2px] pb-px pl-[3px] font-[Roboto,sans-serif] text-[11px] text-[#222]">
      <TitleBar />
      <MenuBar />

      <div className="flex flex-col pb-px">
        <div className="flex">
          <Handle className="w-[9px]" />
          <ToolGroup tools={fileTools} />
          <Handle className="w-[10px]" />
          <ToolGroup tools={editTools} />
          <button type="button" aria-label="Auswahloptionen" className="flex w-[9px] items-center">
            <Chevron dir="down" />
          </button>
          <Handle className="w-[10px]" />
          <ToolGroup tools={viewTools} />
          <Handle className="w-[10px]" />
          <ToolGroup tools={displayTools} />
        </div>
        <div className="flex">
          <Handle className="w-[9px]" />
          <ToolGroup tools={featureTools} />
          <Handle className="w-[10px]" />
          <ToolGroup tools={sketchTools} />
          <Handle className="w-[9px]" />
          <ToolGroup tools={helpTools} />
        </div>
      </div>

      <main className="flex min-h-0 flex-1">
        <ModelTree />
        <Splitter />
        <SketchCanvas />
        <div className="w-[38px] shrink-0">
          <div className="-mt-[3px]">
            <SideHandle />
          </div>
          <SideTools tools={sketcherTools} />
          <SideHandle />
          <SideTools tools={datumTools} />
        </div>
      </main>

      <section aria-label="Meldungen" className="mt-1 mr-[5px] ml-[6px] flex h-11 shrink-0 bg-[#e6ebe6]">
        <div className="flex-1 pt-[11px] pl-[3px] leading-4">
          <p className="flex items-center">
            <svg viewBox="0 0 12 14" className="h-[14px] w-3" aria-hidden="true">
              <path d="M1 4.5H5V1.5L11 7L5 12.5V9.5H1Z" fill="#00e050" stroke="#000" />
            </svg>
            Startpunkt wählen.
          </p>
          <p className="flex items-center gap-1 pl-[3px]">
            <span className="h-[5px] w-[5px] rounded-full bg-[#0000ff]" />
            <span className="whitespace-pre">
              Bei angezeigter Bedingung:  Klicken mit RMT deaktiviert Bedingung, UMSCHALT-Taste + Klicken mit RMT sperrt Bedingung, TAB-Taste schaltet aktive Bedingung ein/aus.
            </span>
          </p>
        </div>
        <div className="flex w-[15px] flex-col justify-between bg-[#f4f4ea]">
          <button type="button" aria-label="Nach oben" className="flex h-[15px] items-center justify-center rounded-[2px] border border-[#a5a193] bg-[#d6d6ce]">
            <Chevron dir="up" />
          </button>
          <div>
            <div className="h-2 rounded-[2px] border border-[#a5a193] bg-[#d6d6ce]" />
            <button type="button" aria-label="Nach unten" className="flex h-[15px] w-full items-center justify-center rounded-[2px] border border-[#a5a193] bg-[#d6d6ce]">
              <Chevron dir="down" />
            </button>
          </div>
        </div>
      </section>

      <footer className="flex h-6 shrink-0 justify-end border-t border-[#808080] pr-[34px]">
        <div className="mr-24 h-[22px] w-px bg-[#808080]" />
        <div className="mt-px flex h-[19px] w-[153px] border border-[#808080] bg-white">
          <select
            aria-label="Auswahlfilter"
            defaultValue="Skizzierer-Elemente"
            className="m-px h-[15px] min-w-0 flex-1 appearance-none bg-[#2858c8] py-0 pl-[3px] font-['Liberation_Sans',Arial,sans-serif] leading-[15px] text-white outline-1 -outline-offset-1 outline-[#222] outline-dotted"
          >
            <option>Skizzierer-Elemente</option>
          </select>
          <span className="flex w-4 items-center justify-center border-l border-[#808080] bg-[#d6d6ce]">
            <Chevron dir="down" className="text-[#808080]" />
          </span>
        </div>
      </footer>
    </div>
  );
}
